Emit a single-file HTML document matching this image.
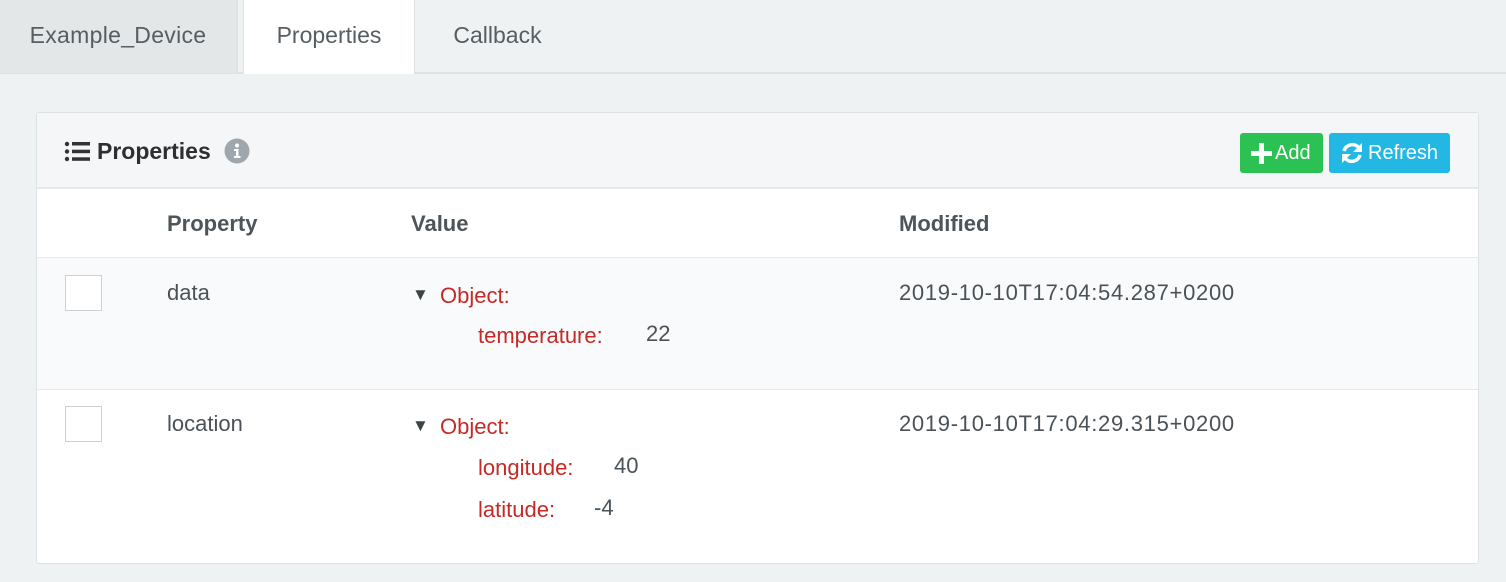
<!DOCTYPE html>
<html><head><style>
*{box-sizing:border-box;margin:0;padding:0}
body{width:1506px;height:582px;background:#eef2f3;font-family:"Liberation Sans",sans-serif;color:#4a5257;position:relative;overflow:hidden}
.a{position:absolute}
.tab{position:absolute;top:0;height:73px;font-size:23px;line-height:71px;text-align:center;color:#555e63}
.t{position:absolute;font-size:22px}
.red{color:#c62a26}
</style></head><body>
<div class="a" style="left:0;top:72px;width:1506px;height:2px;background:#dde2e4"></div>
<div class="tab" style="left:0;width:238px;background:#e4e7e8;border-right:2px solid #dfe3e5;letter-spacing:0.3px">Example_Device</div>
<div class="tab" style="left:243px;width:172px;height:74px;background:#fff;border-left:1px solid #dde2e4;border-right:1px solid #dde2e4">Properties</div>
<div class="tab" style="left:415px;width:165px;">Callback</div>

<div class="a" style="left:36px;top:112px;width:1443px;height:452px;background:#fff;border:1px solid #dde3e5;border-radius:3px"></div>
<div class="a" style="left:37px;top:113px;width:1441px;height:76px;background:#f5f6f7;border-bottom:2px solid #e5e9eb"></div>
<svg class="a" style="left:64px;top:141px" width="27" height="21" viewBox="0 0 27 21"><g fill="#333"><circle cx="3" cy="3" r="2.2"/><circle cx="3" cy="10.5" r="2.2"/><circle cx="3" cy="18" r="2.2"/><rect x="8" y="1" width="18" height="3.5"/><rect x="8" y="8.7" width="18" height="3.5"/><rect x="8" y="16.3" width="18" height="3.5"/></g></svg>
<div class="t" style="left:97px;top:138px;font-weight:bold;color:#2d2f31;font-size:23px">Properties</div>
<svg class="a" style="left:224px;top:138px" width="26" height="26"><circle cx="13" cy="13" r="12.5" fill="#9ea7ad"/><circle cx="13" cy="7.5" r="2" fill="#fff"/><path d="M10 11h4.5v7h2v2h-6.5v-2h2v-5h-2z" fill="#fff"/></svg>
<div class="a" style="left:1240px;top:133px;width:83px;height:40px;background:#2bc253;border-radius:3px;color:#fff;font-size:20px;line-height:40px;padding-left:35px">Add</div>
<svg class="a" style="left:1251px;top:143px" width="21" height="21"><path d="M8 0h5v8h8v5h-8v8h-5v-8h-8v-5h8z" fill="#fff"/></svg>
<div class="a" style="left:1329px;top:133px;width:121px;height:40px;background:#22b8e3;border-radius:3px;color:#fff;font-size:20px;line-height:40px;padding-left:39px">Refresh</div>
<svg class="a" style="left:1340px;top:141px" width="24" height="24" viewBox="0 0 24 24"><g fill="none" stroke="#fff" stroke-width="3.5"><path d="M4 10a8.5 8.5 0 0 1 15-3"/><path d="M20 14a8.5 8.5 0 0 1 -15 3"/></g><path d="M22 2v9h-9z" fill="#fff"/><path d="M2 22v-9h9z" fill="#fff"/></svg>

<div class="t" style="left:167px;top:211px;font-weight:bold;color:#4d5559">Property</div>
<div class="t" style="left:411px;top:211px;font-weight:bold;color:#4d5559">Value</div>
<div class="t" style="left:899px;top:211px;font-weight:bold;color:#4d5559">Modified</div>

<div class="a" style="left:37px;top:257px;width:1441px;height:133px;background:#f9fafb;border-top:1px solid #e6eaec;border-bottom:1px solid #e6eaec"></div>
<div class="a" style="left:65px;top:275px;width:37px;height:36px;background:#fff;border:1px solid #ccd1d4"></div>
<div class="t" style="left:167px;top:280px">data</div>
<div class="t" style="left:412px;top:285px;font-size:17px;color:#3d4448">▼</div>
<div class="t red" style="left:440px;top:283px">Object:</div>
<div class="t red" style="left:478px;top:323px">temperature:</div>
<div class="t" style="left:646px;top:321px">22</div>
<div class="t" style="left:899px;top:280px;letter-spacing:0.7px">2019-10-10T17:04:54.287+0200</div>

<div class="a" style="left:65px;top:406px;width:37px;height:36px;background:#fff;border:1px solid #ccd1d4"></div>
<div class="t" style="left:167px;top:411px">location</div>
<div class="t" style="left:412px;top:416px;font-size:17px;color:#3d4448">▼</div>
<div class="t red" style="left:440px;top:414px">Object:</div>
<div class="t red" style="left:478px;top:455px">longitude:</div>
<div class="t" style="left:614px;top:453px">40</div>
<div class="t red" style="left:478px;top:497px">latitude:</div>
<div class="t" style="left:594px;top:495px">-4</div>
<div class="t" style="left:899px;top:411px;letter-spacing:0.7px">2019-10-10T17:04:29.315+0200</div>
</body></html>
